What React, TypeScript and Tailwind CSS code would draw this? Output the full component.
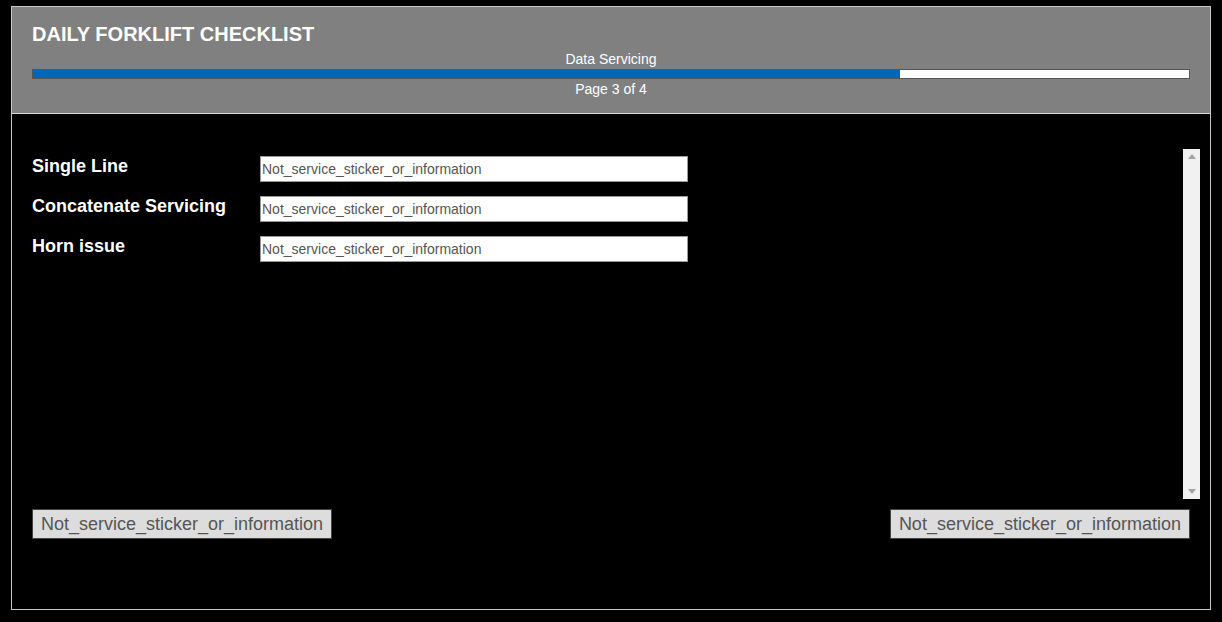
export default function App() {
  const rows = ["Single Line", "Concatenate Servicing", "Horn issue"];
  const value = "Not_service_sticker_or_information";

  return (
    <div className="min-h-screen w-full bg-black pt-[6px] pl-[11px] font-['Liberation_Sans',Arial,sans-serif]">
      <div className="flex h-[604px] w-[1200px] flex-col border border-[#c8c8c8] bg-black">
        <header className="flex flex-col border-b border-[#d9d9d9] bg-[#808080] px-[20px] pt-[15px] pb-[14px]">
          <h1 className="text-[20px] leading-[24px] font-bold text-white">DAILY FORKLIFT CHECKLIST</h1>
          <p className="mt-[3px] text-center text-[14px] leading-[20px] text-white">Data Servicing</p>
          <div className="h-[10px] w-full border border-[#555] bg-white">
            <div className="h-full w-3/4 bg-[#0066b8]"></div>
          </div>
          <p className="text-center text-[14px] leading-[20px] text-white">Page 3 of 4</p>
        </header>

        <main className="flex flex-1 flex-col px-[20px] pt-[35px]">
          <div className="-mr-[10px] flex h-[350px]">
            <div className="flex flex-1 flex-col gap-[14px] pt-[7px]">
              {rows.map((label) => (
                <div key={label} className="flex h-[26px] items-start">
                  <span className="w-[228px] text-[18px] leading-[20px] font-bold text-white">{label}</span>
                  <input
                    readOnly
                    value={value}
                    className="h-[26px] w-[428px] border border-[#999] bg-white px-[1px] text-[14px] text-[#555] outline-none"
                  />
                </div>
              ))}
            </div>
            <div className="flex w-[17px] flex-col items-center justify-between bg-[#f1f1f1] py-[5px]">
              <svg width="8" height="5" viewBox="0 0 8 5">
                <path d="M4 0 L8 5 L0 5 Z" fill="#a3a3a3" />
              </svg>
              <svg width="8" height="5" viewBox="0 0 8 5">
                <path d="M0 0 L8 0 L4 5 Z" fill="#a3a3a3" />
              </svg>
            </div>
          </div>

          <div className="mt-[10px] flex justify-between">
            <button className="h-[30px] border border-[#444] bg-[#dddddd] px-[8px] text-[18px] leading-[20px] text-[#555]">
              {value}
            </button>
            <button className="h-[30px] border border-[#444] bg-[#dddddd] px-[8px] text-[18px] leading-[20px] text-[#555]">
              {value}
            </button>
          </div>
        </main>
      </div>
    </div>
  );
}
